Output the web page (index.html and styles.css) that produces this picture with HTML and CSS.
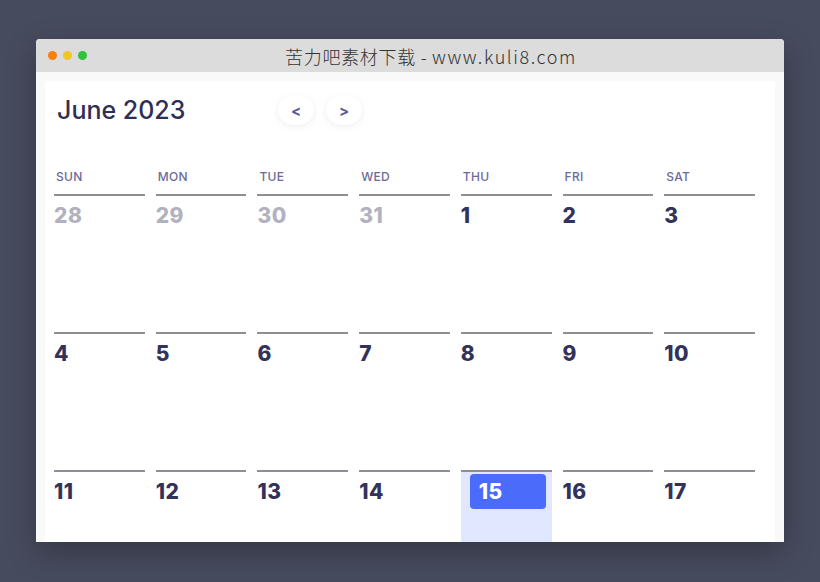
FILE: index.html
```html
<!DOCTYPE html>
<html lang="zh-CN">
<head>
<meta charset="utf-8">
<title>June 2023</title>
<link rel="stylesheet" href="styles.css">
</head>
<body>
<div class="window">
  <div class="titlebar">
    <div class="dots"><span class="dot orange"></span><span class="dot yellow"></span><span class="dot green"></span></div>
    <div class="title">苦力吧素材下载 - <span class="latin">www.kuli8.com</span></div>
  </div>
  <div class="content">
    <div class="card">
      <div class="top">
        <h1 class="month">June 2023</h1>
        <button class="nav">&lt;</button>
        <button class="nav">&gt;</button>
      </div>
      <div class="grid">
        <div class="wd">SUN</div><div class="wd">MON</div><div class="wd">TUE</div><div class="wd">WED</div><div class="wd">THU</div><div class="wd">FRI</div><div class="wd">SAT</div>
        <div class="day other"><span class="num">28</span></div>
        <div class="day other"><span class="num">29</span></div>
        <div class="day other"><span class="num">30</span></div>
        <div class="day other"><span class="num">31</span></div>
        <div class="day"><span class="num">1</span></div>
        <div class="day"><span class="num">2</span></div>
        <div class="day"><span class="num">3</span></div>
        <div class="day"><span class="num">4</span></div>
        <div class="day"><span class="num">5</span></div>
        <div class="day"><span class="num">6</span></div>
        <div class="day"><span class="num">7</span></div>
        <div class="day"><span class="num">8</span></div>
        <div class="day"><span class="num">9</span></div>
        <div class="day"><span class="num">10</span></div>
        <div class="day"><span class="num">11</span></div>
        <div class="day"><span class="num">12</span></div>
        <div class="day"><span class="num">13</span></div>
        <div class="day"><span class="num">14</span></div>
        <div class="day today"><span class="num">15</span></div>
        <div class="day"><span class="num">16</span></div>
        <div class="day"><span class="num">17</span></div>
      </div>
    </div>
  </div>
</div>
</body>
</html>
```

FILE: styles.css
```css
* { box-sizing: border-box; }
html, body { margin: 0; padding: 0; }
body {
  background: #474b5e;
  height: 100vh;
  padding-top: 39px;
  display: flex;
  align-items: flex-start;
  justify-content: center;
  font-family: Inter, "Noto Sans", sans-serif;
  overflow: hidden;
}
.window {
  width: 748px;
  height: 503px;
  background: #f9f9f9;
  border-radius: 4px 4px 0 0;
  box-shadow: 0 10px 30px rgba(0, 0, 0, 0.28);
  display: flex;
  flex-direction: column;
  overflow: hidden;
}
.titlebar {
  height: 33px;
  flex: none;
  background: #dcdcdc;
  display: flex;
  align-items: center;
}
.dots {
  display: flex;
  gap: 6px;
  padding-left: 12px;
}
.dot {
  width: 9px;
  height: 9px;
  border-radius: 50%;
}
.orange { background: #f77f0d; }
.yellow { background: #efc625; }
.green { background: #31c33c; }
.title {
  flex: 1;
  text-align: center;
  padding-right: 9px;
  font-family: "Noto Sans CJK SC", sans-serif;
  font-size: 18px;
  font-weight: 300;
  line-height: 24px;
  color: #333;
  letter-spacing: 0.7px;
}
.latin { letter-spacing: 1.6px; }
.content {
  flex: 1;
  padding: 9px 9px 0 9px;
  display: flex;
  min-height: 0;
}
.card {
  flex: 1;
  background: #fff;
  padding: 14px 20px 0 9px;
  overflow: hidden;
}
.top {
  display: flex;
  align-items: center;
  gap: 12px;
  margin-bottom: 44px;
}
.month {
  margin: 0 -12px 0 0;
  width: 224px;
  padding-left: 3px;
  font-size: 25px;
  font-weight: 500;
  color: #2f2f55;
  line-height: 30px;
}
.nav {
  width: 36px;
  height: 30px;
  border: none;
  border-radius: 15px;
  background: #fff;
  box-shadow: 0 2px 6px rgba(40, 40, 80, 0.07);
  color: #5b5b96;
  font-family: Inter, sans-serif;
  font-size: 15px;
  font-weight: 700;
  padding: 0;
}
.grid {
  display: grid;
  grid-template-columns: repeat(7, 1fr);
  column-gap: 11px;
  grid-template-rows: 25px;
  grid-auto-rows: 138px;
}
.wd {
  font-size: 12px;
  font-weight: 500;
  letter-spacing: 0.3px;
  color: #6c6a98;
  line-height: 15px;
  padding-left: 2px;
}
.day {
  border-top: 2px solid #8e8e95;
  padding-top: 8px;
}
.num {
  display: block;
  font-size: 21px;
  font-weight: 800;
  letter-spacing: 0.5px;
  line-height: 24px;
  color: #33335a;
}
.other .num { color: #b2b1be; }
.today {
  background: #e1e7fe;
  padding-top: 2px;
}
.today .num {
  margin: 0 6px 0 9px;
  padding: 6px 9px 5px;
  background: #4b6bfb;
  color: #fff;
  border-radius: 4px;
}
```
